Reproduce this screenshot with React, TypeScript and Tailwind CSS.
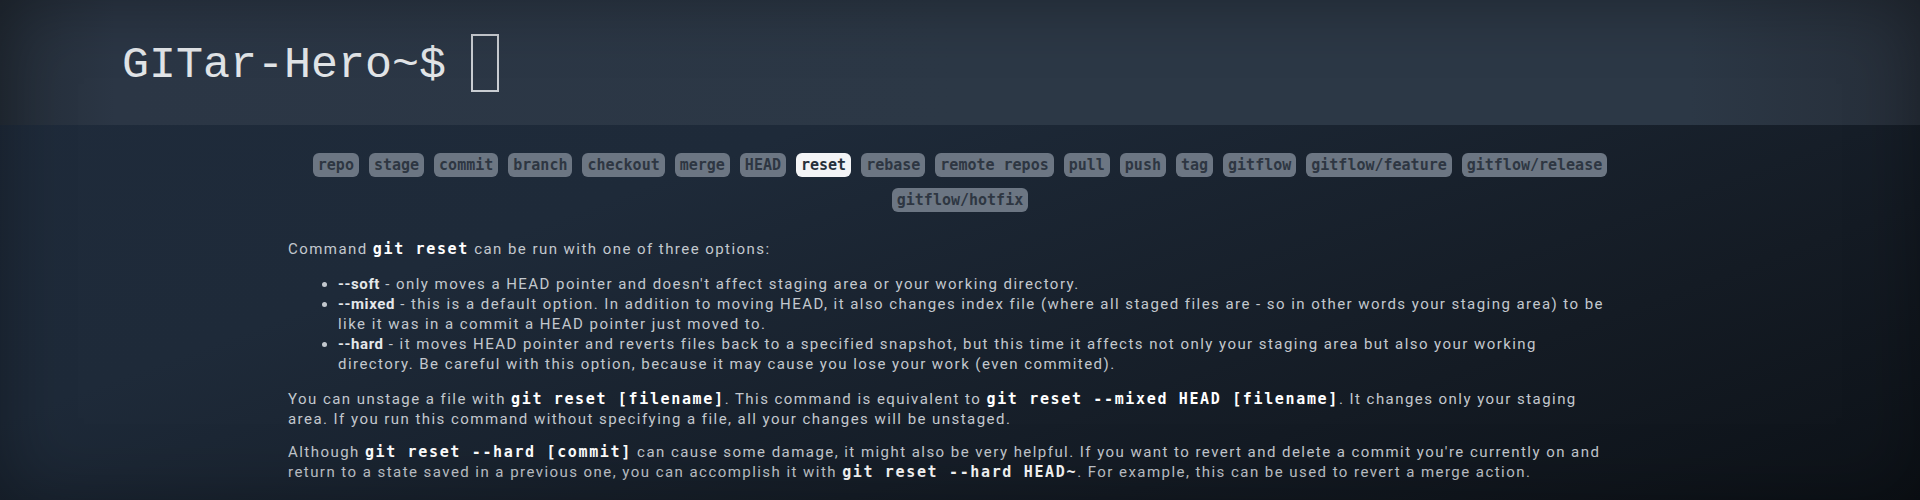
import React from "react";

const tags = [
  "repo",
  "stage",
  "commit",
  "branch",
  "checkout",
  "merge",
  "HEAD",
  "reset",
  "rebase",
  "remote repos",
  "pull",
  "push",
  "tag",
  "gitflow",
  "gitflow/feature",
  "gitflow/release",
  "gitflow/hotfix",
];

const active = "reset";

function Code({ children }: { children: React.ReactNode }) {
  return (
    <code className="font-['DejaVu_Sans_Mono',monospace] text-[15px] font-bold tracking-[1.65px] text-white">
      {children}
    </code>
  );
}

function Opt({ children }: { children: React.ReactNode }) {
  return <b className="font-bold tracking-[0.6px] text-[#e4e7ea]">{children}</b>;
}

export default function App() {
  return (
    <div className="relative min-h-[500px] w-full overflow-hidden bg-[linear-gradient(160deg,#1f2b3b_0%,#1e2a39_35%,#141b24_75%,#0d1218_100%)] font-['Roboto',sans-serif]">
      <header className="flex h-[125px] items-center bg-[linear-gradient(90deg,#242d38_0%,#2b3645_6%,#2c3846_50%,#2c3846_88%,#262e39_100%)] pl-[122px]">
        <h1 className="flex items-center font-['Liberation_Mono',monospace] text-[45px] font-normal leading-none text-[#e2e5e8]">
          <span className="pt-[6px] whitespace-pre">GITar-Hero~$ </span>
          <span className="ml-[-2px] inline-block h-[58px] w-[28px] border-2 border-[#c9cdd2]" />
        </h1>
      </header>

      <main className="mx-auto w-[1344px] pt-[28px] pb-[20px]">
        <nav className="flex flex-wrap justify-center gap-x-[10px] gap-y-[11px]">
          {tags.map((t) => (
            <span
              key={t}
              className={
                t === active
                  ? "h-[24px] whitespace-pre rounded-[6px] bg-[#f3f4f6] px-[5px] font-['DejaVu_Sans_Mono',monospace] text-[15px] font-bold leading-[24px] text-[#27303b]"
                  : "h-[24px] whitespace-pre rounded-[6px] bg-[#6c7683] px-[5px] font-['DejaVu_Sans_Mono',monospace] text-[15px] font-bold leading-[24px] text-[#2e3642]"
              }
            >
              {t}
            </span>
          ))}
        </nav>

        <div className="mt-[27px] text-[15px] leading-[20px] tracking-[1.45px] text-[#c3c8ce]">
          <p>
            Command <Code>git reset</Code> can be run with one of three options:
          </p>
          <ul className="mt-[15px] list-disc pl-[50px]">
            <li>
              <Opt>--soft</Opt> - only moves a HEAD pointer and doesn't affect staging area or your working
              directory.
            </li>
            <li>
              <Opt>--mixed</Opt> - this is a default option. In addition to moving HEAD, it also changes index
              file (where all staged files are - so in other words your staging area) to be
              <br />
              like it was in a commit a HEAD pointer just moved to.
            </li>
            <li>
              <Opt>--hard</Opt> - it moves HEAD pointer and reverts files back to a specified snapshot, but this
              time it affects not only your staging area but also your working
              <br />
              directory. Be careful with this option, because it may cause you lose your work (even commited).
            </li>
          </ul>
          <p className="mt-[15px]">
            You can unstage a file with <Code>git reset [filename]</Code>. This command is equivalent to{" "}
            <Code>git reset --mixed HEAD [filename]</Code>. It changes only your staging
            <br />
            area. If you run this command without specifying a file, all your changes will be unstaged.
          </p>
          <p className="mt-[13px]">
            Although <Code>git reset --hard [commit]</Code> can cause some damage, it might also be very
            helpful. If you want to revert and delete a commit you're currently on and
            <br />
            return to a state saved in a previous one, you can accomplish it with{" "}
            <Code>git reset --hard HEAD~</Code>. For example, this can be used to revert a merge action.
          </p>
        </div>
      </main>

      <div className="pointer-events-none absolute inset-0 shadow-[inset_0_0_70px_rgba(0,0,0,0.35)]" />
    </div>
  );
}
